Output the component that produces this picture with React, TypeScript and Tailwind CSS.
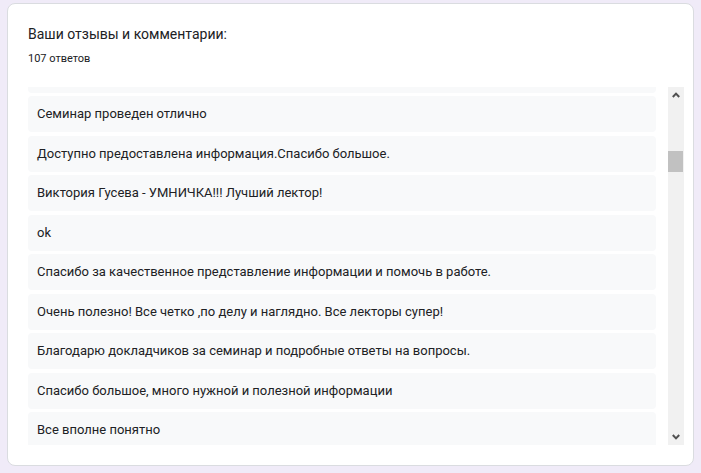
import React from "react";

const answers = [
  "",
  "Семинар проведен отлично",
  "Доступно предоставлена информация.Спасибо большое.",
  "Виктория Гусева - УМНИЧКА!!! Лучший лектор!",
  "ok",
  "Спасибо за качественное представление информации и помочь в работе.",
  "Очень полезно! Все четко ,по делу и наглядно. Все лекторы супер!",
  "Благодарю докладчиков за семинар и подробные ответы на вопросы.",
  "Спасибо большое, много нужной и полезной информации",
  "Все вполне понятно",
];

const Arrow: React.FC<{ down?: boolean }> = ({ down }) => (
  <svg width="8" height="6" viewBox="0 0 8 6" className={down ? "rotate-180" : ""}>
    <path d="M0.8 5 L4 1.6 L7.2 5" fill="none" stroke="#505050" strokeWidth="2" />
  </svg>
);

const App: React.FC = () => {
  return (
    <div className="min-h-[473px] bg-[#f0ebf8] px-[7px] pt-[3px] pb-[7px] font-['Roboto',sans-serif] text-[#202124]">
      <div className="rounded-[8px] border border-[#dadce0] bg-white pl-[20px] pr-[9px] pt-[20px] pb-[20px]">
        {/* Header */}
        <div className="text-[14px] leading-[20px]">Ваши отзывы и комментарии:</div>
        <div className="mt-[7px] text-[11px] leading-[16px]">107 ответов</div>

        {/* Responses with scrollbar */}
        <div className="mt-[20px] flex h-[358px] gap-[12px]">
          <div className="flex-1 overflow-hidden">
            <div className="-mt-[30.5px] flex flex-col gap-[3.5px]">
              {answers.map((a, i) => (
                <div
                  key={i}
                  className="flex h-[36px] shrink-0 items-center rounded-[4px] bg-[#f8f9fa] pl-[9px] text-[13px]"
                >
                  {a}
                </div>
              ))}
            </div>
          </div>

          <div className="flex w-[16px] flex-col bg-[#f1f1f1]">
            <div className="flex h-[16px] items-center justify-center">
              <Arrow />
            </div>
            <div className="mt-[48px] mr-[1px] h-[21px] bg-[#c1c1c1]" />
            <div className="flex-1" />
            <div className="flex h-[16px] items-center justify-center">
              <Arrow down />
            </div>
          </div>
        </div>
      </div>
    </div>
  );
};

export default App;
